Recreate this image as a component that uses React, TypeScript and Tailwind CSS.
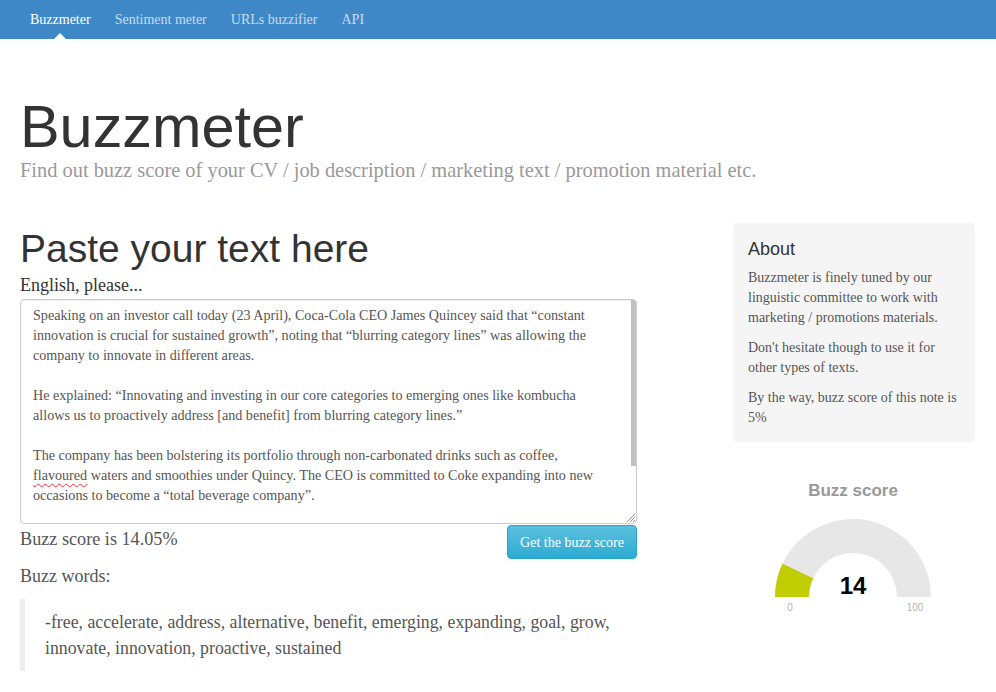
const serif = "font-['Liberation_Serif','Times_New_Roman',serif]";
const sans = "font-['Liberation_Sans',Arial,sans-serif]";

const navItems = ["Buzzmeter", "Sentiment meter", "URLs buzzifier", "API"];

function Navbar() {
  return (
    <nav className="h-[39px] bg-[#3f88c8]">
      <ul className={`flex h-full pl-[18px] text-[14px] ${serif}`}>
        {navItems.map((item, i) => (
          <li
            key={item}
            className={`relative flex items-center px-[12px] ${
              i === 0 ? "text-white" : "text-[#c6dcef]"
            }`}
          >
            {item}
            {i === 0 && (
              <span className="absolute bottom-0 left-1/2 -translate-x-1/2 border-x-[6px] border-b-[6px] border-x-transparent border-b-white" />
            )}
          </li>
        ))}
      </ul>
    </nav>
  );
}

// lines as the browser wrapped them in the original textarea
const textLines: (string | null)[] = [
  "Speaking on an investor call today (23 April), Coca-Cola CEO James Quincey said that “constant",
  "innovation is crucial for sustained growth”, noting that “blurring category lines” was allowing the",
  "company to innovate in different areas.",
  null,
  "He explained: “Innovating and investing in our core categories to emerging ones like kombucha",
  "allows us to proactively address [and benefit] from blurring category lines.”",
  null,
  "The company has been bolstering its portfolio through non-carbonated drinks such as coffee,",
  "flavoured",
  "occasions to become a “total beverage company”.",
];

function FakeTextarea() {
  return (
    <div className="relative h-[225px] overflow-hidden rounded-[4px] border border-[#ccc] bg-white shadow-[inset_0_1px_1px_rgba(0,0,0,0.075)]">
      <div className={`whitespace-nowrap pl-[12px] pt-[5px] text-[14.15px] leading-[20px] text-[#555] ${serif}`}>
        {textLines.map((line, i) =>
          line === null ? (
            <div key={i} className="h-[20px]" />
          ) : line === "flavoured" ? (
            <div key={i}>
              <span className="underline decoration-red-500 decoration-wavy decoration-1 underline-offset-[3px]">
                flavoured
              </span>{" "}
              waters and smoothies under Quincy. The CEO is committed to Coke expanding into new
            </div>
          ) : (
            <div key={i}>{line}</div>
          )
        )}
      </div>
      {/* scroll thumb */}
      <div className="absolute right-0 top-0 h-[166px] w-[5px] bg-[#c1c1c1]" />
      {/* resize grip */}
      <svg className="absolute bottom-[1px] right-[1px]" width="9" height="9" viewBox="0 0 9 9">
        <path d="M9 1 L1 9 M9 4 L4 9 M9 7 L7 9" stroke="#999" strokeWidth="1" />
      </svg>
    </div>
  );
}

function Gauge() {
  // 14% of a half circle, centre (120,127), R 78, r 44
  return (
    <svg width="242" height="150" viewBox="0 0 242 150" className="block">
      <text
        x="120"
        y="26"
        textAnchor="middle"
        fontFamily="Liberation Sans, Arial, sans-serif"
        fontWeight="bold"
        fontSize="17"
        fill="#999"
      >
        Buzz score
      </text>
      <path d="M42 127 A78 78 0 0 1 198 127 L164 127 A44 44 0 0 0 76 127 Z" fill="#e8e7e8" />
      <path d="M42 127 A78 78 0 0 1 49.42 93.79 L80.19 108.27 A44 44 0 0 0 76 127 Z" fill="#c0cd00" />
      <text
        x="120"
        y="124"
        textAnchor="middle"
        fontFamily="Liberation Sans, Arial, sans-serif"
        fontWeight="bold"
        fontSize="24"
        fill="#010101"
      >
        14
      </text>
      <text x="57" y="141" textAnchor="middle" fontFamily="Liberation Sans, Arial, sans-serif" fontSize="10" fill="#b3b3b3">
        0
      </text>
      <text x="182" y="141" textAnchor="middle" fontFamily="Liberation Sans, Arial, sans-serif" fontSize="10" fill="#b3b3b3">
        100
      </text>
    </svg>
  );
}

export default function App() {
  return (
    <div className="min-h-[692px] bg-white">
      <Navbar />
      <div className="pl-[20px] pr-[21px]">
        <header>
          <h1 className={`mt-[58px] text-[59.4px] leading-[60px] text-[#333] ${sans}`}>Buzzmeter</h1>
          <p className={`mt-[1px] text-[20.4px] leading-[24px] text-[#999] ${serif}`}>
            Find out buzz score of your CV / job description / marketing text / promotion material etc.
          </p>
        </header>

        <div className="flex justify-between">
          <main className="w-[617px]">
            <h2 className={`mt-[46px] text-[39px] leading-[42px] text-[#333] ${sans}`}>Paste your text here</h2>
            <p className={`mt-[4px] text-[18px] leading-[22px] text-[#333] ${serif}`}>English, please...</p>
            <div className="mt-[3px]">
              <FakeTextarea />
            </div>
            <div className="flex items-start justify-between">
              <p className={`mt-[4px] text-[18.2px] leading-[22px] text-[#555] ${serif}`}>Buzz score is 14.05%</p>
              <button
                className={`mt-[1px] h-[34px] w-[130px] rounded-[4px] border border-[#28a4c9] bg-gradient-to-b from-[#5bc0de] to-[#2aabd2] text-[14px] text-white ${serif}`}
              >
                Get the buzz score
              </button>
            </div>
            <p className={`mt-[6px] text-[18px] leading-[22px] text-[#555] ${serif}`}>Buzz words:</p>
            <blockquote
              className={`mt-[12px] border-l-[5px] border-[#eee] px-[20px] py-[10px] text-[17.8px] leading-[26px] text-[#555] ${serif}`}
            >
              -free, accelerate, address, alternative, benefit, emerging, expanding, goal, grow, innovate,
              innovation, proactive, sustained
            </blockquote>
          </main>

          <aside className="w-[242px]">
            <div className="mt-[41px] rounded-[4px] bg-[#f5f5f5] px-[15px] pb-[14px] pt-[16px]">
              <h3 className={`mb-[9px] text-[18px] leading-[20px] text-[#333] ${sans}`}>About</h3>
              <div className={`space-y-[10px] text-[14px] leading-[20px] text-[#555] ${serif}`}>
                <p>Buzzmeter is finely tuned by our linguistic committee to work with marketing / promotions materials.</p>
                <p>Don't hesitate though to use it for other types of texts.</p>
                <p>By the way, buzz score of this note is 5%</p>
              </div>
            </div>
            <div className="mt-[28px]">
              <Gauge />
            </div>
          </aside>
        </div>
      </div>
    </div>
  );
}
